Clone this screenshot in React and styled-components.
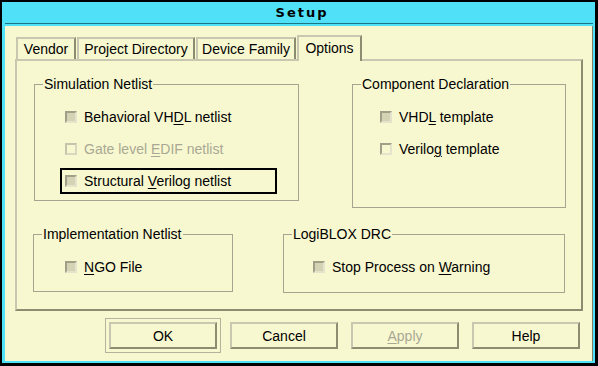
import React from 'react';
import styled, { createGlobalStyle } from 'styled-components';

const Global = createGlobalStyle`
    html, body {
        margin: 0;
        padding: 0;
        background: #000;
    }
    body {
        font-family: "Liberation Sans", Arial, sans-serif;
        font-size: 14px;
        color: #000;
    }
`;

const Window = styled.div`
    width: 598px;
    height: 366px;
    box-sizing: border-box;
    background: #000;
    padding: 2px 3px 3px 2px;
`;

const Frame = styled.div`
    height: 100%;
    box-sizing: border-box;
    background: #50e0f8;
    padding: 0 2px 2px 3px;
    display: flex;
    flex-direction: column;
`;

const TitleBar = styled.div`
    height: 21px;
    background: #50e0f8;
    border-bottom: 1px solid #1c7484;
    display: flex;
    align-items: center;
    justify-content: center;
    font-family: "DejaVu Sans", sans-serif;
    font-weight: bold;
    font-size: 13px;
    letter-spacing: 2px;
    padding-left: 6px;
`;

const Body = styled.div`
    flex: 1;
    margin-top: 2px;
    background: #f8f8d0;
    border-right: 1px solid #808068;
    padding: 9px 0 0 10px;
    display: flex;
    flex-direction: column;
`;

const TabStrip = styled.div`
    height: 24px;
    display: flex;
    align-items: flex-start;
    gap: 1px;
    padding-left: 1px;
`;

const Tab = styled.div`
    position: relative;
    z-index: ${p => (p.$active ? 1 : 0)};
    box-sizing: border-box;
    width: ${p => p.$w}px;
    height: ${p => (p.$active ? 26 : 22)}px;
    margin-top: ${p => (p.$active ? 0 : 2)}px;
    border-top: 2px solid #c8c8b0;
    border-left: 2px solid #c8c8b0;
    border-right: 2px solid #8c8c70;
    background: #f8f8d0;
    display: flex;
    align-items: ${p => (p.$active ? 'flex-start' : 'center')};
    padding-top: ${p => (p.$active ? 3 : 0)}px;
    justify-content: center;
`;

const Panel = styled.div`
    box-sizing: border-box;
    width: 568px;
    height: 252px;
    border-top: 2px solid #c8c8b0;
    border-left: 2px solid #c8c8b0;
    border-right: 2px solid #8c8c70;
    border-bottom: 2px solid #8c8c70;
    display: flex;
    flex-direction: column;
`;

const GroupRow = styled.div`
    display: flex;
    align-items: flex-start;
    margin-top: ${p => p.$top}px;
    padding-left: ${p => p.$indent}px;
    gap: ${p => p.$gap}px;
`;

const Group = styled.div`
    position: relative;
    box-sizing: border-box;
    width: ${p => p.$w}px;
    height: ${p => p.$h}px;
    border: 1px solid #a4a490;
    padding: 19px 0 0 ${p => p.$pad}px;
    display: flex;
    flex-direction: column;
    gap: 6px;
`;

const Legend = styled.span`
    position: absolute;
    top: -9px;
    left: 8px;
    padding: 0 1px;
    line-height: 16px;
    background: #f8f8d0;
`;

const Toggle = styled.div`
    box-sizing: border-box;
    height: 26px;
    width: 217px;
    border: 2px solid ${p => (p.$focus ? '#000' : 'transparent')};
    padding-left: 3px;
    display: flex;
    align-items: center;
    gap: 7px;
    white-space: nowrap;
    color: ${p => (p.$disabled ? '#a8a894' : '#000')};
`;

const Box = styled.span`
    flex: none;
    box-sizing: border-box;
    width: 12px;
    height: 12px;
    border: 2px solid;
    border-color: ${p => (p.$disabled
        ? '#c4c4ac #d8d8c0 #d8d8c0 #c4c4ac'
        : '#a0a088 #e4e4cc #e4e4cc #a0a088')};
    background: ${p => (p.$on ? '#d4d4b4' : '#f8f8d0')};
`;

const Mn = styled.u`
    text-decoration: underline;
    text-underline-offset: 2px;
`;

const ButtonRow = styled.div`
    display: flex;
    align-items: center;
    gap: 13px;
    margin-top: 7px;
    padding-left: 90px;
`;

const DefaultRing = styled.div`
    border: 1px solid #b4b49c;
    padding: 3px;
    margin-right: -4px;
    display: flex;
`;

const Button = styled.div`
    box-sizing: border-box;
    width: 108px;
    height: 27px;
    border: 2px solid;
    border-color: #c8c8b0 #8c8c70 #8c8c70 #c8c8b0;
    background: #f8f8d0;
    display: flex;
    align-items: center;
    justify-content: center;
    color: ${p => (p.$disabled ? '#a8a894' : '#000')};
`;

const Check = ({ on, disabled, focus, children }) => (
    <Toggle $focus={focus} $disabled={disabled}>
        <Box $on={on} $disabled={disabled} />
        <span>{children}</span>
    </Toggle>
);

const App = () => {
    return (
        <Window>
            <Global />
            <Frame>
                <TitleBar>Setup</TitleBar>
                <Body>
                    <TabStrip>
                        <Tab $w={60}>Vendor</Tab>
                        <Tab $w={118}>Project Directory</Tab>
                        <Tab $w={100}>Device Family</Tab>
                        <Tab $w={65} $active>Options</Tab>
                    </TabStrip>
                    <Panel>
                        <GroupRow $top={23} $indent={17} $gap={53}>
                            <Group $w={265} $h={117} $pad={25}>
                                <Legend>Simulation Netlist</Legend>
                                <Check on>Behavioral VH<Mn>D</Mn>L netlist</Check>
                                <Check disabled>Gate level <Mn>E</Mn>DIF netlist</Check>
                                <Check on focus>Structural <Mn>V</Mn>erilog netlist</Check>
                            </Group>
                            <Group $w={214} $h={124} $pad={22}>
                                <Legend>Component Declaration</Legend>
                                <Check on>VHD<Mn>L</Mn> template</Check>
                                <Check>Verilo<Mn>g</Mn> template</Check>
                            </Group>
                        </GroupRow>
                        <GroupRow $top={26} $indent={16} $gap={50}>
                            <Group $w={200} $h={58} $pad={26}>
                                <Legend>Implementation Netlist</Legend>
                                <Check on><Mn>N</Mn>GO File</Check>
                            </Group>
                            <Group $w={282} $h={59} $pad={24}>
                                <Legend>LogiBLOX DRC</Legend>
                                <Check on>Stop Process on <Mn>W</Mn>arning</Check>
                            </Group>
                        </GroupRow>
                    </Panel>
                    <ButtonRow>
                        <DefaultRing>
                            <Button>OK</Button>
                        </DefaultRing>
                        <Button>Cancel</Button>
                        <Button $disabled><span><Mn>A</Mn>pply</span></Button>
                        <Button>Help</Button>
                    </ButtonRow>
                </Body>
            </Frame>
        </Window>
    );
};

export default App;
